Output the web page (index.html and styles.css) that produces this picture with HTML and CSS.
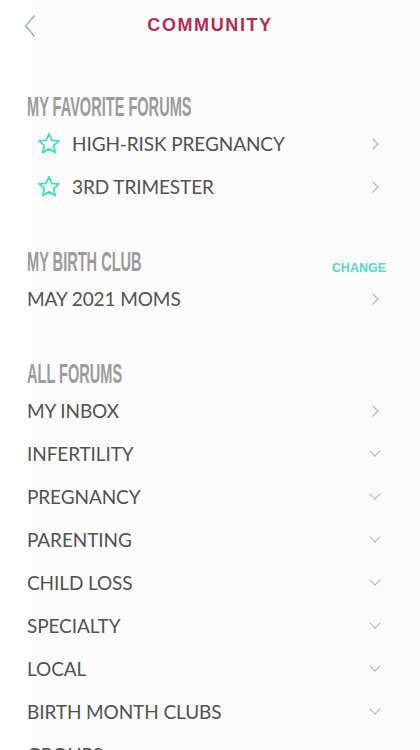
FILE: index.html
```html
<!DOCTYPE html>
<html lang="en">
<head>
  <meta charset="UTF-8" />
  <title>Community</title>
  <meta name="viewport" content="width=device-width, initial-scale=1" />
  <link rel="stylesheet" href="styles.css">
</head>
<body>

  <header class="topbar">
    <a class="back" href="#" aria-label="Back">
      <svg width="12" height="24" viewBox="0 0 12 24"><path d="M10.5 1.5 L1.8 12 L10.5 22.5" fill="none" stroke="#86b8b1" stroke-width="1.4"/></svg>
    </a>
    <h1>COMMUNITY</h1>
  </header>

  <main class="content">

    <section class="section">
      <div class="section-head">
        <h2><span>MY FAVORITE FORUMS</span></h2>
      </div>
      <a class="row fav" href="#">
        <svg class="star" width="24" height="23" viewBox="0 0 24 23"><path d="M12 1.8 L14.9 8.3 L22 8.9 L16.6 13.6 L18.3 20.6 L12 16.9 L5.7 20.6 L7.4 13.6 L2 8.9 L9.1 8.3 Z" fill="none" stroke="#3fe0bf" stroke-width="1.8" stroke-linejoin="round"/></svg>
        <span class="label">HIGH-RISK PREGNANCY</span>
        <span class="chev-right"></span>
      </a>
      <a class="row fav" href="#">
        <svg class="star" width="24" height="23" viewBox="0 0 24 23"><path d="M12 1.8 L14.9 8.3 L22 8.9 L16.6 13.6 L18.3 20.6 L12 16.9 L5.7 20.6 L7.4 13.6 L2 8.9 L9.1 8.3 Z" fill="none" stroke="#3fe0bf" stroke-width="1.8" stroke-linejoin="round"/></svg>
        <span class="label">3RD TRIMESTER</span>
        <span class="chev-right"></span>
      </a>
    </section>

    <section class="section">
      <div class="section-head">
        <h2><span>MY BIRTH CLUB</span></h2>
        <a class="change" href="#">CHANGE</a>
      </div>
      <a class="row" href="#">
        <span class="label">MAY 2021 MOMS</span>
        <span class="chev-right"></span>
      </a>
    </section>

    <section class="section">
      <div class="section-head">
        <h2><span>ALL FORUMS</span></h2>
      </div>
      <a class="row" href="#">
        <span class="label">MY INBOX</span>
        <span class="chev-right"></span>
      </a>
      <a class="row" href="#"><span class="label">INFERTILITY</span><span class="chev-down"></span></a>
      <a class="row" href="#"><span class="label">PREGNANCY</span><span class="chev-down"></span></a>
      <a class="row" href="#"><span class="label">PARENTING</span><span class="chev-down"></span></a>
      <a class="row" href="#"><span class="label">CHILD LOSS</span><span class="chev-down"></span></a>
      <a class="row" href="#"><span class="label">SPECIALTY</span><span class="chev-down"></span></a>
      <a class="row" href="#"><span class="label">LOCAL</span><span class="chev-down"></span></a>
      <a class="row" href="#"><span class="label">BIRTH MONTH CLUBS</span><span class="chev-down"></span></a>
      <a class="row" href="#"><span class="label">GROUPS</span><span class="chev-down"></span></a>
    </section>

  </main>

</body>
</html>
```

FILE: styles.css
```css
body {
  margin: 0;
  font-family: Lato, "Liberation Sans", sans-serif;
  background: linear-gradient(to right, #ffffff 32px, #fbfbfc 32px);
  overflow: hidden;
}

a {
  text-decoration: none;
}

.topbar {
  height: 50px;
  display: flex;
  align-items: center;
  justify-content: center;
  position: relative;
}

.back {
  position: absolute;
  left: 24px;
  top: 14px;
}

.topbar h1 {
  margin: 0;
  font-family: "Liberation Sans", Arial, sans-serif;
  font-weight: bold;
  font-size: 18px;
  letter-spacing: 1.6px;
  color: #b82b50;
}

.content {
  padding: 42px 0 0 27px;
  display: flex;
  flex-direction: column;
  gap: 39px;
}

.section-head {
  height: 30px;
  display: flex;
  align-items: center;
  justify-content: space-between;
  padding-right: 34px;
}

.section-head h2 {
  margin: 0;
  font-family: "Liberation Sans", Arial, sans-serif;
  font-weight: bold;
  font-size: 28px;
  line-height: 30px;
  color: #9b9b9b;
}

.section-head h2 span {
  display: inline-block;
  transform: scaleX(0.52);
  transform-origin: left center;
  white-space: nowrap;
}

.change {
  font-family: "Liberation Sans", Arial, sans-serif;
  font-weight: bold;
  font-size: 12.5px;
  color: #55d9c6;
  margin-top: 12px;
}

.row {
  height: 43px;
  display: flex;
  align-items: center;
  padding-right: 43px;
  color: #525252;
}

.row.fav {
  padding-left: 10px;
}

.star {
  margin-right: 11px;
}

.label {
  flex: 1;
  font-size: 19px;
  letter-spacing: -0.1px;
}

.chev-right {
  width: 7px;
  height: 7px;
  border-top: 1.5px solid #a9a9a9;
  border-right: 1.5px solid #a9a9a9;
  transform: rotate(45deg);
}

.chev-down {
  width: 7px;
  height: 7px;
  border-bottom: 1.5px solid #b3b3b3;
  border-right: 1.5px solid #b3b3b3;
  transform: rotate(45deg);
  margin-right: -2px;
  margin-top: -5px;
}
```
